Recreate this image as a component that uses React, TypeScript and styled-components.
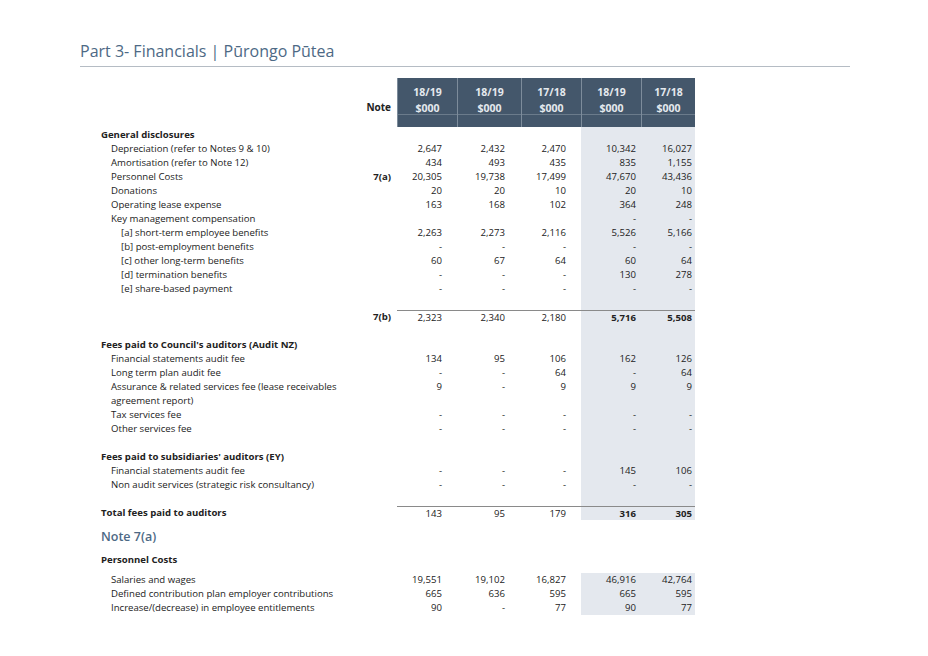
import React from 'react'
import styled, { createGlobalStyle } from 'styled-components'

const Global = createGlobalStyle`
  body { margin: 0; background: #fff; font-family: "Open Sans", "Noto Sans", sans-serif; }
`

const Page = styled.div`
  width: 928px;
  height: 656px;
  padding: 40px 78px 0 80px;
  box-sizing: border-box;
`

const Title = styled.h1`
  margin: 0;
  font-size: 16px;
  font-weight: 400;
  color: #4d6985;
  line-height: 22px;
  padding-bottom: 4px;
  border-bottom: 1px solid #b5bcc4;
`

const Table = styled.div`
  margin: 11px 0 0 8px;
  width: 607px;
  font-size: 9.6px;
  color: #222;
`

const cols = '252px 57px 60px 64px 60px 60px 54px'

const Row = styled.div<{ $h?: number }>`
  display: grid;
  grid-template-columns: ${cols};
  height: ${p => p.$h ?? 14}px;
  line-height: 14px;
`

const Label = styled.div<{ $indent?: number; $bold?: boolean }>`
  padding-left: ${p => 13 + (p.$indent ?? 0) * 10}px;
  font-weight: ${p => (p.$bold ? 700 : 400)};
  white-space: nowrap;
`

const NoteCell = styled.div`
  text-align: right;
  font-weight: 700;
  padding-right: 6px;
`

const Val = styled.div<{ $shade?: boolean; $bold?: boolean; $pad: number; $line?: boolean }>`
  text-align: right;
  padding-right: ${p => p.$pad}px;
  background: ${p => (p.$shade ? '#e4e8ee' : 'transparent')};
  font-weight: ${p => (p.$bold ? 700 : 400)};
  border-top: ${p => (p.$line ? '1px solid #8a8a8a' : 'none')};
  box-sizing: border-box;
`

const HeadRow = styled.div`
  display: grid;
  grid-template-columns: ${cols};
  height: 49px;
`

const HeadCell = styled.div`
  background: #44576b;
  color: #e4e9ee;
  font-weight: 700;
  font-size: 10.5px;
  text-align: center;
  line-height: 16px;
  padding-top: 6px;
  border-left: 1px solid #7d8c9b;
  position: relative;
  &::after {
    content: '';
    position: absolute;
    left: 0;
    right: 0;
    top: 36px;
    border-top: 1px solid #6b7b8b;
  }
`

const HeadNote = styled.div`
  grid-column: 2;
  text-align: right;
  font-weight: 700;
  font-size: 10px;
  padding: 22px 6px 0 0;
`

const SubHeading = styled.div`
  color: #4d6985;
  font-size: 12.5px;
  font-weight: 600;
  height: 20px;
  line-height: 20px;
  margin: 7px 0 6px 13px;
`

const pads = [15, 16, 15, 5, 3]

type R = {
  label?: string
  indent?: number
  bold?: boolean
  note?: string
  v?: string[]
  boldShade?: boolean
  line?: boolean
  shade?: boolean
}

const top: R[] = [
  { label: 'General disclosures', bold: true, v: [] },
  { label: 'Depreciation (refer to Notes 9 & 10)', indent: 1, v: ['2,647', '2,432', '2,470', '10,342', '16,027'] },
  { label: 'Amortisation (refer to Note 12)', indent: 1, v: ['434', '493', '435', '835', '1,155'] },
  { label: 'Personnel Costs', indent: 1, note: '7(a)', v: ['20,305', '19,738', '17,499', '47,670', '43,436'] },
  { label: 'Donations', indent: 1, v: ['20', '20', '10', '20', '10'] },
  { label: 'Operating lease expense', indent: 1, v: ['163', '168', '102', '364', '248'] },
  { label: 'Key management compensation', indent: 1, v: ['', '', '', '-', '-'] },
  { label: '[a] short-term employee benefits', indent: 2, v: ['2,263', '2,273', '2,116', '5,526', '5,166'] },
  { label: '[b] post-employment benefits', indent: 2, v: ['-', '-', '-', '-', '-'] },
  { label: '[c] other long-term benefits', indent: 2, v: ['60', '67', '64', '60', '64'] },
  { label: '[d] termination benefits', indent: 2, v: ['-', '-', '-', '130', '278'] },
  { label: '[e] share-based payment', indent: 2, v: ['-', '-', '-', '-', '-'] },
  { v: [] },
  { note: '7(b)', v: ['2,323', '2,340', '2,180', '5,716', '5,508'], boldShade: true, line: true },
  { v: [] },
  { label: "Fees paid to Council's auditors (Audit NZ)", bold: true, v: [] },
  { label: 'Financial statements audit fee', indent: 1, v: ['134', '95', '106', '162', '126'] },
  { label: 'Long term plan audit fee', indent: 1, v: ['-', '-', '64', '-', '64'] },
  { label: 'Assurance & related services fee (lease receivables', indent: 1, v: ['9', '-', '9', '9', '9'] },
  { label: 'agreement report)', indent: 1, v: [] },
  { label: 'Tax services fee', indent: 1, v: ['-', '-', '-', '-', '-'] },
  { label: 'Other services fee', indent: 1, v: ['-', '-', '-', '-', '-'] },
  { v: [] },
  { label: "Fees paid to subsidiaries' auditors (EY)", bold: true, v: [] },
  { label: 'Financial statements audit fee', indent: 1, v: ['-', '-', '-', '145', '106'] },
  { label: 'Non audit services (strategic risk consultancy)', indent: 1, v: ['-', '-', '-', '-', '-'] },
  { v: [] },
  { label: 'Total fees paid to auditors', bold: true, v: ['143', '95', '179', '316', '305'], boldShade: true, line: true },
]

const bottom: R[] = [
  { label: 'Salaries and wages', indent: 1, v: ['19,551', '19,102', '16,827', '46,916', '42,764'] },
  { label: 'Defined contribution plan employer contributions', indent: 1, v: ['665', '636', '595', '665', '595'] },
  { label: 'Increase/(decrease) in employee entitlements', indent: 1, v: ['90', '-', '77', '90', '77'] },
]

const Line = ({ r }: { r: R }) => (
  <Row>
    <Label $indent={r.indent} $bold={r.bold}>{r.label}</Label>
    <NoteCell>{r.note}</NoteCell>
    {pads.map((p, i) => (
      <Val
        key={i}
        $pad={p}
        $shade={i > 2 && r.shade !== false}
        $bold={i > 2 && r.boldShade}
        $line={r.line}
        style={r.line ? { lineHeight: '13px' } : undefined}
      >
        {r.v?.[i]}
      </Val>
    ))}
  </Row>
)

const App = () => (
  <Page>
    <Global />
    <Title>Part 3- Financials | Pūrongo Pūtea</Title>
    <Table>
      <HeadRow>
        <div />
        <HeadNote>Note</HeadNote>
        {['18/19', '18/19', '17/18', '18/19', '17/18'].map((y, i) => (
          <HeadCell key={i}>
            {y}
            <br />
            $000
          </HeadCell>
        ))}
      </HeadRow>
      <Row $h={1}>
        <div /><div /><div /><div /><div />
        <Val $pad={0} $shade /><Val $pad={0} $shade />
      </Row>
      {top.map((r, i) => <Line key={i} r={r} />)}
      <SubHeading>Note 7(a)</SubHeading>
      <Row>
        <Label $bold>Personnel Costs</Label>
      </Row>
      <Row $h={6} />
      {bottom.map((r, i) => <Line key={i} r={r} />)}
    </Table>
  </Page>
)

export default App
